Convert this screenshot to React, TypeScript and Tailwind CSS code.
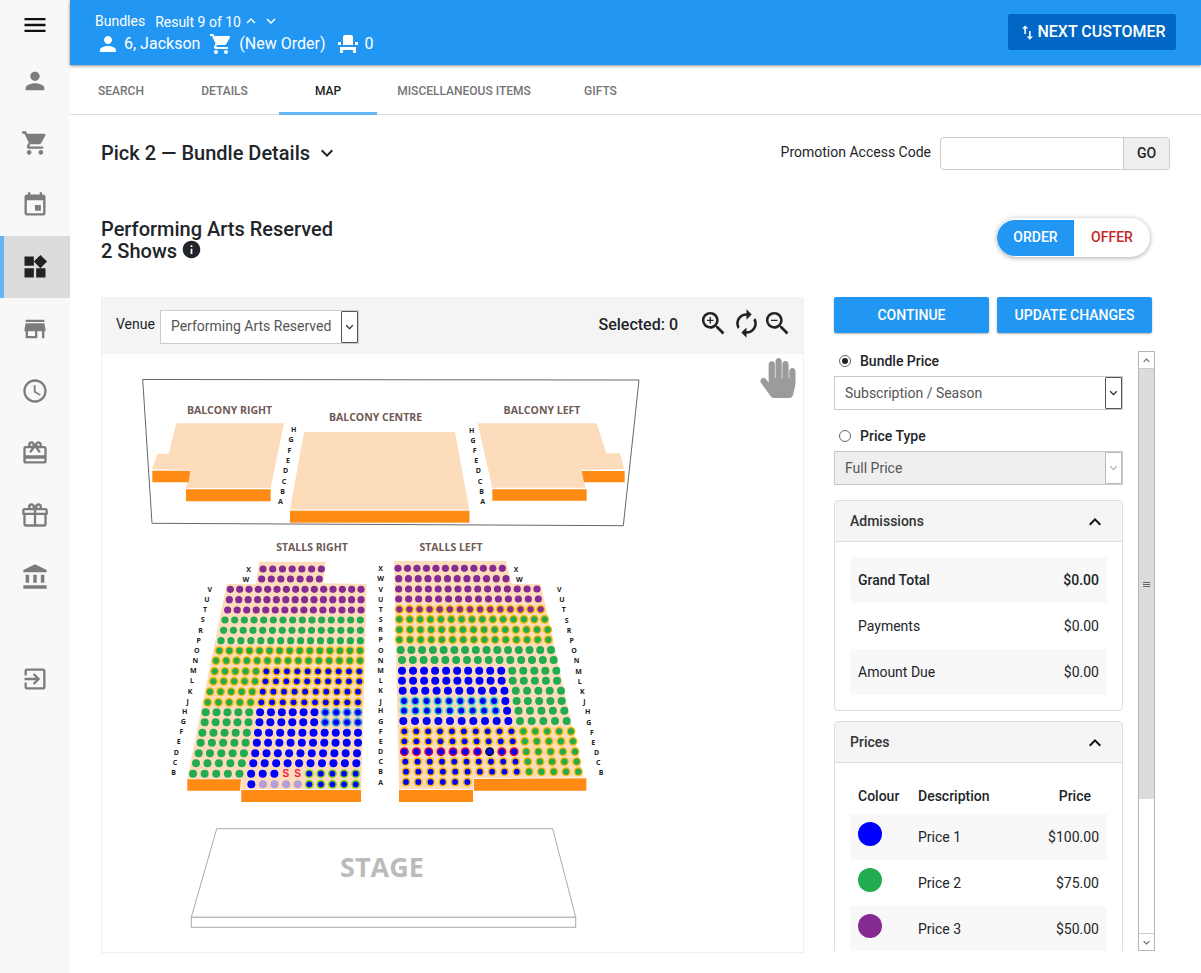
import { ReactNode } from "react";
import {
  MdAccessTime,
  MdAccountBalance,
  MdCardGiftcard,
  MdEvent,
  MdExitToApp,
  MdEventSeat,
  MdInfo,
  MdKeyboardArrowDown,
  MdKeyboardArrowUp,
  MdMenu,
  MdPerson,
  MdShoppingCart,
  MdStore,
  MdSwapVert,
  MdSync,
  MdWidgets,
  MdZoomIn,
  MdZoomOut,
} from "react-icons/md";
import { FaHandPaper } from "react-icons/fa";

const GiftOutline = ({ className }: { className?: string }) => (
  <svg viewBox="0 0 24 24" className={className} fill="currentColor">
    <path d="M22,12V20A2,2 0 0,1 20,22H4A2,2 0 0,1 2,20V12A1,1 0 0,1 1,11V8A2,2 0 0,1 3,6H6.17C6.06,5.69 6,5.35 6,5A3,3 0 0,1 9,2C10,2 10.88,2.5 11.43,3.24V3.23L12,4L12.57,3.23V3.24C13.12,2.5 14,2 15,2A3,3 0 0,1 18,5C18,5.35 17.94,5.69 17.83,6H21A2,2 0 0,1 23,8V11A1,1 0 0,1 22,12M4,20H11V12H4V20M20,20V12H13V20H20M9,4A1,1 0 0,0 8,5A1,1 0 0,0 9,6A1,1 0 0,0 10,5A1,1 0 0,0 9,4M15,4A1,1 0 0,0 14,5A1,1 0 0,0 15,6A1,1 0 0,0 16,5A1,1 0 0,0 15,4M3,8V10H11V8H3M13,8V10H21V8H13Z" />
  </svg>
);

const NAV_ICONS = [
  MdPerson,
  MdShoppingCart,
  MdEvent,
  MdWidgets,
  MdStore,
  MdAccessTime,
  MdCardGiftcard,
  GiftOutline,
  MdAccountBalance,
];

const Sidebar = () => (
  <aside className="w-[70px] shrink-0 bg-[#f8f8f8] flex flex-col">
    <div className="h-[50px] flex items-center justify-center text-[#111]">
      <MdMenu className="w-[28px] h-[28px]" />
    </div>
    {NAV_ICONS.map((Icon, i) =>
      i === 3 ? (
        <div
          key={i}
          className="h-[62px] flex items-center justify-center bg-[#dcdcdc] border-l-[4px] border-[#64b5f6] pr-[4px] text-[#222]"
        >
          <Icon className="w-[28px] h-[28px]" />
        </div>
      ) : (
        <div key={i} className="h-[62px] flex items-center justify-center text-[#7c7c7c]">
          <Icon className="w-[28px] h-[28px]" />
        </div>
      )
    )}
    <div className="h-[62px] mt-[40px] flex items-center justify-center text-[#7c7c7c]">
      <MdExitToApp className="w-[28px] h-[28px]" />
    </div>
  </aside>
);

const Header = () => (
  <header className="h-[65px] bg-[#2196f3] shadow-[0_1px_3px_rgba(0,0,0,0.45)] flex items-center justify-between pl-[25px] pr-[25px] text-white relative">
    <div className="flex flex-col gap-[1px] mt-[2px]">
      <div className="flex items-center text-[14px] leading-[20px] h-[20px]">
        <span>Bundles</span>
        <span className="ml-[10px] mt-[1px]">Result 9 of 10</span>
        <MdKeyboardArrowUp className="w-[18px] h-[18px] ml-[1px]" />
        <MdKeyboardArrowDown className="w-[18px] h-[18px] ml-[2px]" />
      </div>
      <div className="flex items-center text-[16px] h-[24px]">
        <MdPerson className="w-[24px] h-[24px] ml-[1px]" />
        <span className="ml-[4px]">6, Jackson</span>
        <MdShoppingCart className="w-[24px] h-[24px] ml-[9px]" />
        <span className="ml-[6px]">(New Order)</span>
        <MdEventSeat className="w-[24px] h-[24px] ml-[10px]" />
        <span className="ml-[5px]">0</span>
      </div>
    </div>
    <button className="w-[168px] h-[36px] mb-[1px] bg-[#0068c4] rounded-[2px] flex items-center justify-center text-[16px] font-medium">
      <MdSwapVert className="w-[19px] h-[19px]" />
      NEXT CUSTOMER
    </button>
  </header>
);

const TABS = [
  { label: "SEARCH", cls: "w-[102px] pt-[2px] text-[#757575]" },
  { label: "DETAILS", cls: "w-[105px] pt-[2px] text-[#757575]" },
  { label: "MAP", cls: "w-[98px] ml-[2px] pt-[5px] text-[#222] border-b-[3px] border-[#64b5f6]" },
  { label: "MISCELLANEOUS ITEMS", cls: "w-[174px] pt-[2px] text-[#757575]" },
  { label: "GIFTS", cls: "w-[99px] pt-[2px] text-[#757575]" },
];

const Tabs = () => (
  <nav className="h-[50px] flex border-b border-[#dcdcdc]">
    {TABS.map((t) => (
      <div
        key={t.label}
        className={`h-[50px] flex items-center justify-center text-[12px] font-medium ${t.cls}`}
      >
        {t.label}
      </div>
    ))}
  </nav>
);

const Repeat = (s: string, n: number) => s.repeat(n);

type Row = [number, number, number, number, string];

const STALLS_RIGHT: Row[] = [
  [87, 309, 484, 7, Repeat("p", 7)],
  [117, 305, 478, 7, Repeat("p", 7)],
  [148, 211, 603, 15, Repeat("p", 15)],
  [179, 208, 603, 15, Repeat("p", 15)],
  [210, 203, 603, 15, Repeat("p", 15)],
  [240, 195, 601, 15, Repeat("g", 15)],
  [271, 191, 601, 15, Repeat("g", 15)],
  [302, 183, 601, 15, Repeat("g", 15)],
  [332, 178, 600, 15, Repeat("G", 15)],
  [362, 168, 600, 15, Repeat("G", 15)],
  [394, 164, 598, 15, Repeat("G", 5) + Repeat("B", 10)],
  [424, 160, 598, 15, Repeat("G", 5) + Repeat("B", 10)],
  [455, 150, 594, 15, Repeat("G", 5) + Repeat("B", 10)],
  [487, 143, 594, 15, Repeat("G", 5) + Repeat("B", 10)],
  [517, 137, 594, 15, Repeat("g", 5) + Repeat("b", 6) + Repeat("T", 4)],
  [547, 134, 594, 15, Repeat("g", 5) + Repeat("b", 6) + Repeat("T", 4)],
  [578, 127, 594, 15, Repeat("g", 5) + Repeat("b", 10)],
  [608, 122, 594, 15, Repeat("g", 5) + Repeat("b", 10)],
  [640, 116, 591, 15, Repeat("g", 5) + Repeat("b", 10)],
  [670, 108, 589, 15, Repeat("g", 5) + Repeat("b", 10)],
  [701, 99, 587, 15, Repeat("g", 5) + "bbbSS" + Repeat("L", 5)],
  [733, 274, 587, 10, "bllll" + Repeat("L", 5)],
];

const STALLS_LEFT: Row[] = [
  [85, 69, 382, 12, Repeat("p", 12)],
  [116, 71, 393, 12, Repeat("p", 12)],
  [147, 71, 486, 15, Repeat("p", 15)],
  [177, 71, 490, 15, Repeat("p", 15)],
  [208, 73, 497, 15, Repeat("P", 15)],
  [238, 73, 509, 15, Repeat("G", 15)],
  [269, 73, 518, 15, Repeat("G", 15)],
  [299, 73, 520, 15, Repeat("G", 15)],
  [330, 77, 528, 15, Repeat("g", 15)],
  [360, 81, 536, 15, Repeat("g", 15)],
  [392, 81, 544, 15, Repeat("b", 10) + Repeat("g", 5)],
  [422, 81, 546, 15, Repeat("b", 10) + Repeat("g", 5)],
  [452, 83, 558, 15, Repeat("b", 10) + Repeat("g", 5)],
  [483, 87, 560, 15, Repeat("C", 9) + "b" + Repeat("g", 5)],
  [512, 87, 568, 15, Repeat("C", 9) + "b" + Repeat("g", 5)],
  [543, 85, 575, 15, Repeat("b", 10) + Repeat("g", 5)],
  [574, 88, 588, 15, Repeat("B", 10) + Repeat("G", 5)],
  [604, 88, 594, 15, Repeat("B", 10) + Repeat("G", 5)],
  [635, 88, 600, 15, "RRRRRRRKRR" + Repeat("G", 5)],
  [665, 91, 605, 15, Repeat("B", 10) + Repeat("G", 5)],
  [695, 93, 610, 15, Repeat("B", 10) + Repeat("G", 5)],
  [726, 93, 277, 6, Repeat("B", 6)],
];

const SEAT_STYLE: Record<string, [string, string | null]> = {
  p: ["#862b92", null],
  g: ["#22ab4f", null],
  b: ["#0000ff", null],
  l: ["#b49fd6", null],
  P: ["#862b92", "#f9b800"],
  G: ["#22ab4f", "#f9b800"],
  B: ["#0000ff", "#f9b800"],
  T: ["#0000ff", "#45a5cf"],
  C: ["#0000ff", "#3dd0c0"],
  L: ["#0000ff", "#7ed321"],
  R: ["#0000ff", "#d6003c"],
  K: ["#0000ff", "#111111"],
};

const Seats = ({ rows, ox, oy }: { rows: Row[]; ox: number; oy: number }) => (
  <g>
    {rows.map(([zy, x0, x1, n, pattern], r) =>
      Array.from({ length: n }).map((_, i) => {
        const cx = ox + (x0 + ((x1 - x0) * i) / (n - 1)) / 3;
        const cy = oy + zy / 3;
        const kind = pattern[i];
        if (kind === "S") {
          return (
            <text
              key={`${r}-${i}`}
              x={cx}
              y={cy + 3.5}
              textAnchor="middle"
              fontSize="10"
              fontWeight="700"
              fill="#f0204c"
              fontFamily="Liberation Sans"
            >
              S
            </text>
          );
        }
        const [fill, ring] = SEAT_STYLE[kind];
        const big = r > 7;
        return ring ? (
          <g key={`${r}-${i}`}>
            <circle cx={cx} cy={cy} r={4.5} fill={ring} />
            <circle cx={cx} cy={cy} r={kind === "G" || kind === "P" ? 3.1 : 2.9} fill={fill} />
          </g>
        ) : (
          <circle key={`${r}-${i}`} cx={cx} cy={cy} r={big ? 4 : 3.6} fill={fill} />
        );
      })
    )}
  </g>
);

type Label = [string, number, number];

const Letters = ({ items, ox, oy }: { items: Label[]; ox: number; oy: number }) => (
  <g fontSize="7" fontWeight="700" fill="#222" fontFamily="Open Sans" textAnchor="middle">
    {items.map(([t, x, y], i) => (
      <text key={i} x={ox + x / 3} y={oy + y / 3 + 2.5}>
        {t}
      </text>
    ))}
  </g>
);

const ROW_LETTERS = "XWVUTSRPONMLKJHGFEDCBA".split("");

const SR_LABELS: Label[] = [
  ["X", 266, 87], ["W", 258, 117], ["V", 149, 148], ["U", 141, 178], ["T", 135, 209],
  ["S", 128, 239], ["R", 122, 270], ["P", 116, 301], ["O", 110, 331], ["N", 106, 361],
  ["M", 100, 392], ["L", 96, 422], ["K", 90, 453], ["J", 83, 483], ["H", 74, 514],
  ["G", 70, 545], ["F", 64, 575], ["E", 56, 605], ["D", 49, 636], ["C", 45, 666], ["B", 41, 697],
];

const SL_RIGHT_LABELS: Label[] = [
  ["X", 423, 87], ["W", 433, 117], ["V", 553, 148], ["U", 561, 178], ["T", 566, 209],
  ["S", 575, 240], ["R", 582, 270], ["P", 590, 301], ["O", 597, 331], ["N", 605, 362],
  ["M", 611, 393], ["L", 614, 423], ["K", 622, 454], ["J", 628, 484], ["H", 638, 515],
  ["G", 641, 546], ["F", 651, 576], ["E", 655, 607], ["D", 665, 637], ["C", 670, 668], ["B", 678, 698],
];

const MIDDLE_LABELS: Label[] = ROW_LETTERS.map((l, i): Label => [l, 17, STALLS_LEFT[i][0]]);

const BALC_A: Label[] = [
  ["H", 581, 208], ["G", 573, 239], ["F", 568, 270], ["E", 564, 302],
  ["D", 557, 332], ["C", 552, 363], ["B", 548, 394], ["A", 541, 425],
];

const BALC_B: Label[] = [
  ["H", 95, 181], ["G", 99, 212], ["F", 104, 242], ["E", 109, 272],
  ["D", 115, 302], ["C", 120, 333], ["B", 125, 365], ["A", 128, 395],
];

const pts = (ox: number, oy: number, list: number[][]) =>
  list.map(([x, y]) => `${ox + x / 3},${oy + y / 3}`).join(" ");

const PEACH = "#fddcbc";
const ORANGE = "#ff8a14";

const SectionTitle = ({ x, y, children }: { x: number; y: number; children: ReactNode }) => (
  <text
    x={x}
    y={y}
    textAnchor="middle"
    fontSize="10.5"
    fontWeight="700"
    fill="#6f5a55"
    fontFamily="Open Sans"
  >
    {children}
  </text>
);

const SeatMap = () => (
  <svg viewBox="102 354 702 598" className="w-[702px] h-[598px] block">
    <polygon points="142.7,379.5 639,380 623.3,525.7 152,523.3" fill="#fff" stroke="#666" strokeWidth="1" />

    <polygon points={pts(100, 360, [[229, 190], [552, 190], [512, 384], [258, 384], [272, 330], [156, 328], [172, 281], [206, 281]])} fill={PEACH} />
    <polygon points={pts(100, 360, [[157, 332], [271, 332], [266, 367], [157, 367]])} fill={ORANGE} />
    <polygon points={pts(100, 360, [[258, 388], [512, 388], [512, 424], [258, 424]])} fill={ORANGE} />

    <polygon points="304,432 455,432 469.3,509.5 290,509.5" fill={PEACH} />
    <rect x="290" y="510.7" width="179.5" height="12" fill={ORANGE} />

    <polygon points={pts(440, 370, [[113, 160], [470, 160], [499, 250], [540, 250], [553, 298], [424, 300], [437, 353], [157, 353]])} fill={PEACH} />
    <polygon points={pts(440, 370, [[425, 303], [554, 303], [554, 337], [432, 337]])} fill={ORANGE} />
    <polygon points={pts(440, 370, [[157, 358], [440, 358], [440, 392], [157, 392]])} fill={ORANGE} />

    <SectionTitle x={229.5} y={414}>BALCONY RIGHT</SectionTitle>
    <SectionTitle x={375.5} y={421}>BALCONY CENTRE</SectionTitle>
    <SectionTitle x={542} y={414}>BALCONY LEFT</SectionTitle>
    <SectionTitle x={312} y={550.5}>STALLS RIGHT</SectionTitle>
    <SectionTitle x={451} y={550.5}>STALLS LEFT</SectionTitle>

    <Letters items={BALC_A} ox={100} oy={360} />
    <Letters items={BALC_B} ox={440} oy={370} />

    <polygon points={pts(160, 540, [[297, 65], [497, 65], [490, 130], [620, 132], [604, 748], [244, 748], [244, 716], [82, 716], [200, 132], [288, 132]])} fill={PEACH} />
    <polygon points={pts(160, 540, [[82, 718], [243, 718], [240, 752], [82, 752]])} fill={ORANGE} />
    <rect x="241.3" y="790" width="119.7" height="12" fill={ORANGE} />
    <Seats rows={STALLS_RIGHT} ox={160} oy={540} />
    <Letters items={SR_LABELS} ox={160} oy={540} />

    <polygon points={pts(375, 540, [[57, 63], [393, 63], [410, 132], [497, 132], [625, 712], [297, 715], [295, 748], [72, 748]])} fill={PEACH} />
    <polygon points={pts(375, 540, [[297, 717], [634, 715], [634, 752], [297, 752]])} fill={ORANGE} />
    <rect x="399" y="790" width="74" height="12" fill={ORANGE} />
    <Seats rows={STALLS_LEFT} ox={375} oy={540} />
    <Letters items={MIDDLE_LABELS} ox={375} oy={540} />
    <Letters items={SL_RIGHT_LABELS} ox={375} oy={540} />

    <polygon points="216.7,828.7 552.7,828.7 575.7,917.3 191.3,917.3" fill="#fff" stroke="#aaa" strokeWidth="1" />
    <rect x="191.3" y="917.3" width="384.4" height="10" fill="#fff" stroke="#aaa" strokeWidth="1" />
    <text x="382" y="877" textAnchor="middle" fontSize="27" fontWeight="700" fill="#bbb" fontFamily="Open Sans">
      STAGE
    </text>
  </svg>
);

const MapPanel = () => (
  <section className="w-[703px] h-[656px] border border-[#f0f0f0] border-t-0 relative">
    <div className="h-[57px] bg-[#f4f4f4] flex items-center pl-[14px] pr-[10px] text-[14px]">
      <span className="mt-[-3px]">Venue</span>
      <div className="ml-[5px] mt-[2px] w-[199px] h-[34px] border border-[#ccc] bg-white flex items-center justify-between">
        <span className="pl-[10px] text-[#555]">Performing Arts Reserved</span>
        <span className="w-[17px] h-[32px] border border-[#555] rounded-[1px] flex items-center justify-center text-[#333]">
          <MdKeyboardArrowDown className="w-[16px] h-[16px]" />
        </span>
      </div>
      <span className="ml-auto text-[16px] font-medium mt-[-2px] mr-[20px]">Selected: 0</span>
      <MdZoomIn className="w-[31px] h-[31px] mt-[-5px] text-[#222]" />
      <MdSync className="w-[31px] h-[31px] mt-[-5px] ml-[2px] text-[#222] -scale-x-100" />
      <MdZoomOut className="w-[31px] h-[31px] mt-[-5px] text-[#222]" />
    </div>
    <SeatMap />
    <FaHandPaper className="absolute right-[5px] top-[61px] w-[40px] h-[40px] text-[#9b9b9b]" />
  </section>
);

const FakeSelect = ({ value, disabled }: { value: string; disabled?: boolean }) => (
  <div
    className={`h-[34px] border border-[#c8c8c8] flex items-center justify-between text-[14px] text-[#555] ${
      disabled ? "bg-[#eeeeee]" : "bg-white"
    }`}
  >
    <span className="pl-[10px]">{value}</span>
    <span
      className={`w-[17px] h-[32px] rounded-[1px] flex items-center justify-center border bg-white ${
        disabled ? "border-[#bbb] text-[#bbb]" : "border-[#555] text-[#333]"
      }`}
    >
      <MdKeyboardArrowDown className="w-[16px] h-[16px]" />
    </span>
  </div>
);

const Radio = ({ label, checked }: { label: string; checked?: boolean }) => (
  <div className="h-[20px] flex items-center pl-[5px] text-[14px] font-medium">
    <span className="w-[12px] h-[12px] rounded-full border border-[#666] flex items-center justify-center bg-white">
      {checked && <span className="w-[6px] h-[6px] rounded-full bg-[#222]" />}
    </span>
    <span className="ml-[9px]">{label}</span>
  </div>
);

const CardHead = ({ title }: { title: string }) => (
  <div className="h-[41px] bg-[#f5f5f5] border-b border-[#ddd] flex items-center justify-between pl-[15px] pr-[15px] text-[14px] font-medium text-[#333] rounded-t-[4px]">
    <span>{title}</span>
    <MdKeyboardArrowUp className="w-[24px] h-[24px] text-[#111] mt-[2px]" />
  </div>
);

const ADMISSIONS = [
  { label: "Grand Total", value: "$0.00", strong: true, alt: true },
  { label: "Payments", value: "$0.00", strong: false, alt: false },
  { label: "Amount Due", value: "$0.00", strong: false, alt: true },
];

const PRICES = [
  { name: "Price 1", value: "$100.00", dot: "bg-[#0000ff]", alt: true },
  { name: "Price 2", value: "$75.00", dot: "bg-[#22ab4f]", alt: false },
  { name: "Price 3", value: "$50.00", dot: "bg-[#862b92]", alt: true },
];

const FakeScrollbar = () => (
  <div className="w-[17px] h-[600px] mt-[1px] border border-[#b5b5b5] flex flex-col bg-white text-[#666]">
    <div className="h-[17px] flex items-center justify-center border-b border-[#ccc]">
      <MdKeyboardArrowUp className="w-[13px] h-[13px]" />
    </div>
    <div className="h-[430px] bg-[#dcdcdc] flex items-center justify-center">
      <span className="flex flex-col gap-[1px]">
        <span className="w-[7px] h-[1px] bg-[#666]" />
        <span className="w-[7px] h-[1px] bg-[#666]" />
        <span className="w-[7px] h-[1px] bg-[#666]" />
      </span>
    </div>
    <div className="flex-1" />
    <div className="h-[17px] flex items-center justify-center border-t border-[#ccc]">
      <MdKeyboardArrowDown className="w-[13px] h-[13px]" />
    </div>
  </div>
);

const SidePanel = () => (
  <section className="w-[321px] ml-[30px]">
    <div className="flex gap-[8px]">
      <button className="w-[155px] h-[36px] bg-[#2196f3] text-white text-[14px] font-medium rounded-[2px] shadow-[0_1px_2px_rgba(0,0,0,0.3)]">
        CONTINUE
      </button>
      <button className="w-[155px] h-[36px] bg-[#2196f3] text-white text-[14px] font-medium rounded-[2px] shadow-[0_1px_2px_rgba(0,0,0,0.3)]">
        UPDATE CHANGES
      </button>
    </div>
    <div className="flex justify-between mt-[17px]">
      <div className="w-[289px] h-[601px] overflow-hidden">
        <div className="pt-[1px]">
          <Radio label="Bundle Price" checked />
        </div>
        <div className="mt-[5px]">
          <FakeSelect value="Subscription / Season" />
        </div>
        <div className="mt-[16px]">
          <Radio label="Price Type" />
        </div>
        <div className="mt-[5px]">
          <FakeSelect value="Full Price" disabled />
        </div>

        <div className="mt-[15px] h-[211px] border border-[#ddd] rounded-[4px]">
          <CardHead title="Admissions" />
          <div className="px-[15px] pt-[15px] text-[14px]">
            {ADMISSIONS.map((r) => (
              <div
                key={r.label}
                className={`h-[46px] flex items-center justify-between px-[8px] ${r.alt ? "bg-[#f8f8f8]" : ""} ${
                  r.strong ? "font-medium" : ""
                }`}
              >
                <span>{r.label}</span>
                <span>{r.value}</span>
              </div>
            ))}
          </div>
        </div>

        <div className="mt-[10px] h-[300px] border border-[#ddd] rounded-[4px]">
          <CardHead title="Prices" />
          <div className="px-[15px] pt-[15px] text-[14px]">
            <div className="h-[36px] flex items-center px-[8px] font-medium">
              <span className="w-[60px]">Colour</span>
              <span>Description</span>
              <span className="ml-auto mr-[8px]">Price</span>
            </div>
            {PRICES.map((p) => (
              <div key={p.name} className={`h-[46px] flex items-center px-[8px] ${p.alt ? "bg-[#f8f8f8]" : ""}`}>
                <span className="w-[60px]">
                  <span className={`block w-[24px] h-[24px] rounded-full mt-[-7px] ${p.dot}`} />
                </span>
                <span>{p.name}</span>
                <span className="ml-auto">{p.value}</span>
              </div>
            ))}
          </div>
        </div>
      </div>
      <FakeScrollbar />
    </div>
  </section>
);

const App = () => {
  return (
    <div className="w-[1201px] h-[973px] overflow-hidden flex bg-white text-[#212529] font-[Roboto,sans-serif]">
      <Sidebar />
      <main className="flex-1 min-w-0">
        <Header />
        <Tabs />

        <div className="pl-[31px] pr-[31px]">
          <div className="flex items-center justify-between pt-[22px]">
            <div className="flex items-center text-[20px] font-medium mt-[-2px]">
              Pick 2 — Bundle Details
              <MdKeyboardArrowDown className="w-[24px] h-[24px] ml-[5px]" />
            </div>
            <div className="flex items-center text-[14px]">
              <span className="mt-[-3px]">Promotion Access Code</span>
              <div className="ml-[9px] w-[230px] h-[33px] border border-[#ccc] rounded-[4px] flex justify-end">
                <span className="w-[46px] bg-[#eeeeee] border-l border-[#ccc] rounded-r-[4px] flex items-center justify-center font-medium">
                  GO
                </span>
              </div>
            </div>
          </div>

          <div className="flex items-start justify-between mt-[48px]">
            <div className="text-[20px] leading-[22px] font-medium">
              <div>Performing Arts Reserved</div>
              <div className="flex items-center">
                2 Shows
                <MdInfo className="w-[21px] h-[21px] ml-[4px] mt-[-4px]" />
              </div>
            </div>
            <div className="mr-[20px] w-[153px] h-[39px] rounded-full bg-white shadow-[0_1px_5px_rgba(0,0,0,0.35)] flex overflow-hidden text-[14px] font-medium">
              <span className="w-[77px] h-[36px] my-auto bg-[#2196f3] text-white rounded-l-full flex items-center justify-center">
                ORDER
              </span>
              <span className="flex-1 flex items-center justify-center text-[#c62828]">OFFER</span>
            </div>
          </div>

          <div className="flex mt-[35px]">
            <MapPanel />
            <SidePanel />
          </div>
        </div>
      </main>
    </div>
  );
};

export default App;
